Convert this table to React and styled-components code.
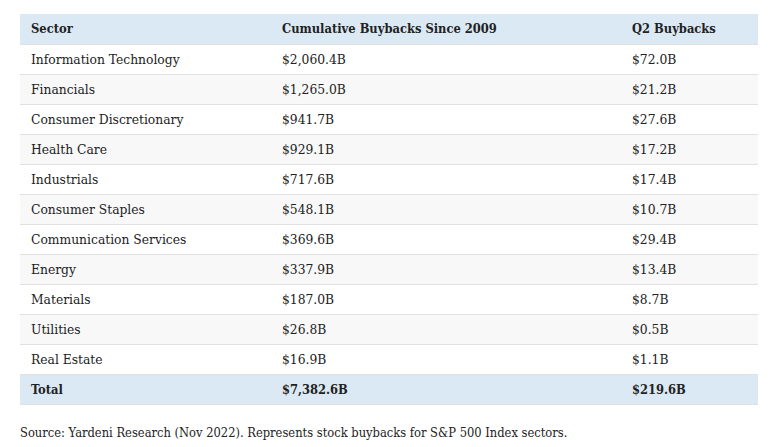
import styled, { createGlobalStyle } from 'styled-components'

const GlobalStyle = createGlobalStyle`
  body {
    margin: 0;
    background: #ffffff;
    font-family: "DejaVu Serif", "Liberation Serif", serif;
    font-stretch: condensed;
    color: #222222;
  }
`

const rows = [
  ['Information Technology', '$2,060.4B', '$72.0B'],
  ['Financials', '$1,265.0B', '$21.2B'],
  ['Consumer Discretionary', '$941.7B', '$27.6B'],
  ['Health Care', '$929.1B', '$17.2B'],
  ['Industrials', '$717.6B', '$17.4B'],
  ['Consumer Staples', '$548.1B', '$10.7B'],
  ['Communication Services', '$369.6B', '$29.4B'],
  ['Energy', '$337.9B', '$13.4B'],
  ['Materials', '$187.0B', '$8.7B'],
  ['Utilities', '$26.8B', '$0.5B'],
  ['Real Estate', '$16.9B', '$1.1B'],
]

export default function App() {
  return (
    <>
      <GlobalStyle />
      <Page>
        <Table>
          <colgroup>
            <col style={{ width: 251 }} />
            <col style={{ width: 350 }} />
            <col style={{ width: 137 }} />
          </colgroup>
          <thead>
            <Row $head>
              <HeadCell>Sector</HeadCell>
              <HeadCell>Cumulative Buybacks Since 2009</HeadCell>
              <HeadCell>Q2 Buybacks</HeadCell>
            </Row>
          </thead>
          <tbody>
            {rows.map(([sector, total, q2], i) => (
              <Row key={sector} $alt={i % 2 === 1}>
                <Cell>{sector}</Cell>
                <Cell>{total}</Cell>
                <Cell>{q2}</Cell>
              </Row>
            ))}
            <Row $head>
              <HeadCell>Total</HeadCell>
              <HeadCell>$7,382.6B</HeadCell>
              <HeadCell>$219.6B</HeadCell>
            </Row>
          </tbody>
        </Table>
        <Source>
          Source: Yardeni Research (Nov 2022). Represents stock buybacks for S&amp;P 500 Index sectors.
        </Source>
      </Page>
    </>
  )
}

const Page = styled.div`
  padding: 14px 24px 0 20px;
`

const Table = styled.table`
  width: 738px;
  border-collapse: collapse;
  table-layout: fixed;
`

const Row = styled.tr`
  height: 30px;
  background: ${({ $head, $alt }) => ($head ? '#dbe9f5' : $alt ? '#f8f8f8' : '#ffffff')};
  border-bottom: 1px solid #e1e1e1;
`

const Cell = styled.td`
  padding: 0 11px;
  font-size: 13.7px;
  text-align: left;
  vertical-align: middle;
  white-space: nowrap;
`

const HeadCell = styled(Cell).attrs({ as: 'th' })`
  font-size: 12.8px;
  font-weight: bold;
`

const Source = styled.p`
  margin: 20px 0 0;
  font-size: 12.8px;
`
